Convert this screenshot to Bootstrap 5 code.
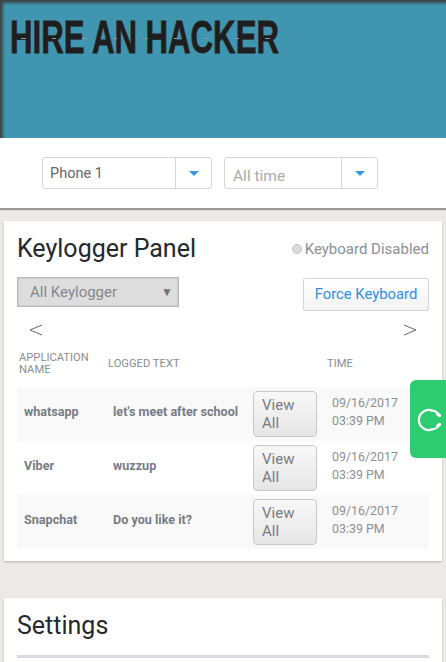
<!DOCTYPE html>
<html lang="en"><head><meta charset="utf-8"><title>Keylogger Panel</title>
<link rel="stylesheet" href="https://cdn.jsdelivr.net/npm/bootstrap@5.3.0/dist/css/bootstrap.min.css">
<style>
html,body{height:662px;overflow:hidden}
body{background:#ede9e6;font-family:Roboto,"Liberation Sans",sans-serif;color:#72777f;position:relative}
.hero{height:138px;background:#4096b0;box-shadow:inset 4px 4px 3px -1px #3c4649;padding:13px 0 0 10px}
.logo{position:relative;display:inline-block;font-family:"Liberation Sans",sans-serif;font-weight:700;font-size:47px;line-height:48px;color:#1d1e20;-webkit-text-stroke:.8px #1d1e20;text-shadow:0 0 1.5px #7f9097;white-space:nowrap;transform:scaleX(.663);transform-origin:left top}
.logo::after{content:"";position:absolute;left:0;right:0;top:25px;height:1px;background:repeating-linear-gradient(90deg,transparent 0 17px,#8d9a9f 17px 24px,transparent 24px 46px)}
.filters{height:70px;background:#fff;box-shadow:0 2px 1px #999;padding:19px 0 0 42px;gap:12px}
.picker{height:32px;border:1px solid #d6d6d6;border-radius:3px;font-size:14.5px;color:#666;background:#fff}
.picker-a{width:170px}.picker-b{width:154px}
.picker-label{flex:1;padding-left:7px;line-height:32px}
.picker-b .picker-label{color:#aaa;font-size:15.5px;padding-left:8px;line-height:37px}
.picker-caret{width:36px;border-left:1px solid #d6d6d6}
.caret-shape{width:0;height:0;border:5px solid transparent;border-top:5px solid #3b97dc;border-bottom:0}
.sheet{background:#fff;margin:0 4px;padding:0 13px;box-shadow:0 1px 2px #b5b5b5}
.sheet-a{margin-top:13px;height:340px;padding-top:12px}
.sheet-b{margin-top:37px;height:70px;padding-top:12px}
.sheet-title{font-size:25px;line-height:32px;color:#25282c;font-weight:400;margin:0}
.status-txt{font-size:15px;color:#8b8f94}
.dot{width:10px;height:10px;border-radius:50%;background:#d9dcdc;border:1px solid #bfc4c4;margin-right:3px}
.filter-box{width:162px;height:30px;margin-top:12px;background:#ddd;border:1px solid #bbb;box-shadow:inset 0 0 0 1px #ccc;padding:0 5px 0 12px;font-size:15px;color:#84888d}
.filter-arrow{font-size:12px;color:#71757a}
.force{width:126px;height:33px;margin-top:13px;background:linear-gradient(#fff,#f3f3f3);border:1px solid #d4d4d4;border-radius:2px;font-size:14.8px;color:#2f8fdc;padding:0}
.pager{height:26px;padding:0 12px;margin-top:6px}
.heads{font-size:11.2px;line-height:12.5px;color:#8b8d90;height:44px;padding-bottom:2px}
.cell-a{width:89px;flex:none}.cell-b{width:143px;flex:none}.cell-c{width:76px;flex:none}.cell-d{flex:1}
.hd-a{padding-left:2px}.hd-b{padding-left:2px}.hd-c{padding-left:2px}
.feed{height:54px;font-size:12.6px;font-weight:700;color:#777c84}
.feed.shade{background:#f9f9f9}
.feed .cell-a,.feed .cell-b{padding-left:7px;padding-bottom:4px}
.feed .cell-c{padding-left:4px}
.viewer{width:64px;height:46px;padding:0 24px 0 8px;background:linear-gradient(#f8f8f8,#e6e6e6);border:1px solid #c9c9c9;border-radius:4px;font-size:15px;line-height:18px;font-weight:400;color:#787b7f;text-align:left}
.stamp{font-weight:400;font-size:12.4px;line-height:18px;color:#8d9093;padding-left:7px;margin-top:-5px}
.side-tab{position:absolute;left:410px;top:380px;width:36px;height:78px;background:#2ecc71;border-radius:6px 0 0 6px;padding:2px 0 0 3px}
.rule{height:3px;background:#d9dbe0;margin-top:13px}
</style></head>
<body>
<div class="hero"><div class="logo">HIRE AN HACKER</div></div>
<div class="filters d-flex">
  <div class="picker picker-a d-flex"><div class="picker-label">Phone 1</div><div class="picker-caret d-flex align-items-center justify-content-center"><span class="caret-shape"></span></div></div>
  <div class="picker picker-b d-flex"><div class="picker-label">All time</div><div class="picker-caret d-flex align-items-center justify-content-center"><span class="caret-shape"></span></div></div>
</div>
<div class="sheet sheet-a">
  <div class="d-flex justify-content-between align-items-center">
    <h2 class="sheet-title">Keylogger Panel</h2>
    <div class="status-txt d-flex align-items-center"><span class="dot"></span>Keyboard Disabled</div>
  </div>
  <div class="d-flex justify-content-between align-items-start">
    <div class="filter-box d-flex justify-content-between align-items-center"><span>All Keylogger</span><span class="filter-arrow">▼</span></div>
    <button class="btn force" type="button">Force Keyboard</button>
  </div>
  <div class="pager d-flex justify-content-between align-items-center">
    <svg width="14" height="12" viewBox="0 0 14 12"><path d="M13 1 1 6l12 5" fill="none" stroke="#666" stroke-width="1"/></svg>
    <svg width="14" height="12" viewBox="0 0 14 12"><path d="M1 1l12 5-12 5" fill="none" stroke="#666" stroke-width="1"/></svg>
  </div>
  <div class="heads d-flex align-items-center">
    <div class="cell-a hd-a">APPLICATION NAME</div><div class="cell-b hd-b">LOGGED TEXT</div><div class="cell-c"></div><div class="cell-d hd-c">TIME</div>
  </div>
  <div class="feed shade d-flex align-items-center">
    <div class="cell-a">whatsapp</div><div class="cell-b">let's meet after school</div><div class="cell-c"><button class="btn viewer" type="button">View All</button></div><div class="cell-d stamp">09/16/2017<br>03:39 PM</div>
  </div>
  <div class="feed d-flex align-items-center">
    <div class="cell-a">Viber</div><div class="cell-b">wuzzup</div><div class="cell-c"><button class="btn viewer" type="button">View All</button></div><div class="cell-d stamp">09/16/2017<br>03:39 PM</div>
  </div>
  <div class="feed shade d-flex align-items-center">
    <div class="cell-a">Snapchat</div><div class="cell-b">Do you like it?</div><div class="cell-c"><button class="btn viewer" type="button">View All</button></div><div class="cell-d stamp">09/16/2017<br>03:39 PM</div>
  </div>
</div>
<div class="sheet sheet-b">
  <h2 class="sheet-title">Settings</h2>
  <div class="rule"></div>
</div>
<div class="side-tab d-flex align-items-center justify-content-center">
  <svg width="26" height="26" viewBox="0 0 26 26" fill="none" stroke="#fff" stroke-linecap="round"><path d="M15 3.5A10 10 0 1 0 15 22.5" stroke-width="2.2"/><path d="M14 3.5c3 0 6 1.300 8 4M14 22.500c3 0 6-1.300 8-4" stroke-width="2"/><path d="M20.500 7l2 1.500M20.500 19l2-1.500" stroke-width="3.400"/></svg>
</div>
<script src="https://cdn.jsdelivr.net/npm/bootstrap@5.3.0/dist/js/bootstrap.bundle.min.js"></script>
</body></html>
